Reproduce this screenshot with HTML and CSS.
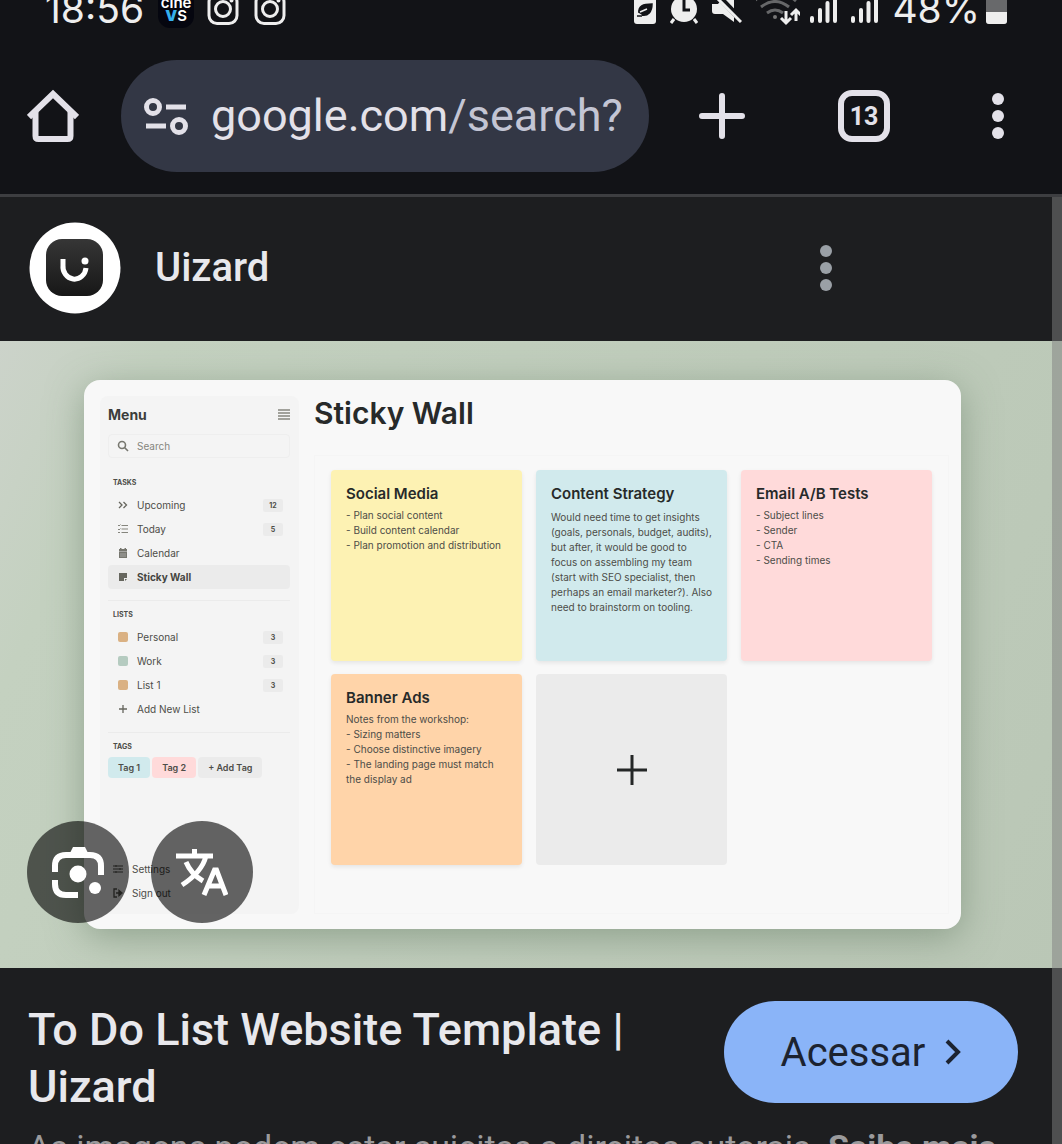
FILE: index.html
```html
<!DOCTYPE html>
<html lang="pt-BR">
<head>
<meta charset="utf-8">
<meta name="viewport" content="width=device-width, initial-scale=1">
<title>To Do List Website Template | Uizard</title>
<link rel="stylesheet" href="styles.css">
</head>
<body>
<div class="phone">
  <header class="status">
    <span class="status-text">18:56</span>
    <div class="cine"><span>cine</span><span><b>V</b>S</span></div>
    <svg class="insta" width="32" height="26" viewBox="0 0 32 26" fill="none" stroke="#eee" stroke-width="3"><rect x="2" y="-6" width="28" height="29.500" rx="8"/><circle cx="16" cy="9" r="7.500"/><circle cx="24.500" cy="0.500" r="1" stroke-width="2"/></svg>
    <svg class="insta" width="32" height="26" viewBox="0 0 32 26" fill="none" stroke="#eee" stroke-width="3"><rect x="2" y="-6" width="28" height="29.500" rx="8"/><circle cx="16" cy="9" r="7.500"/><circle cx="24.500" cy="0.500" r="1" stroke-width="2"/></svg>
    <div class="status-icons">
      <svg width="22" height="26" viewBox="0 0 22 26"><rect y="-8" width="22" height="32" rx="3" fill="#eee"/><path d="M5 13C4 6 9 4 18 4c0 8-4 12-10 11M3 16h5M8 11l5-2" fill="#121317" stroke="#121317" stroke-width="1.500"/><path d="M6 12l7-3" stroke="#eee" stroke-width="1.500"/></svg>
      <svg width="28" height="26" viewBox="0 0 28 26"><circle cx="14" cy="9" r="13" fill="#eee"/><path d="M4 19l-3 4M24 19l3 4" stroke="#eee" stroke-width="3"/><path d="M14 0v10h6" fill="none" stroke="#121317" stroke-width="3"/></svg>
      <svg width="30" height="26" viewBox="0 0 30 26"><path d="M0 4h6l5-6h11v24L11 14H3q-3 0-3-3z" fill="#eee"/><path d="M6-4l25 26" stroke="#121317" stroke-width="6"/><path d="M5-2l24 24" stroke="#eee" stroke-width="3"/></svg>
      <svg class="wifi" width="44" height="26" viewBox="0 0 44 26" fill="none"><path d="M-2 1q21-18 42 0M5 7q14-11 28 0M11 13q8-6 16 0" stroke="#666769" stroke-width="3"/><circle cx="19" cy="17" r="2" fill="#777"/><path d="M30 11v11M25 18l5 5 5-5M40 21V11M35 15l5-5 5 5" stroke="#eee" stroke-width="3"/></svg>
      <svg width="27" height="26" viewBox="0 0 27 26" stroke="#eee" stroke-width="4" stroke-linecap="round"><path d="M2 18v3M10 10v11M17.500 3v18M25-4v25"/></svg>
      <svg width="27" height="26" viewBox="0 0 27 26" stroke="#eee" stroke-width="4" stroke-linecap="round"><path d="M2 18v3M10 10v11M17.500 3v18M25-4v25"/></svg>
      <span class="status-text">48%</span>
      <svg class="battery" width="21" height="26" viewBox="0 0 21 26"><rect y="-8" width="21" height="32" rx="3" fill="#68696b"/><path d="M0 12h21v9q0 3-3 3H3q-3 0-3-3z" fill="#eee"/></svg>
    </div>
  </header>

  <nav class="toolbar">
    <button class="home" aria-label="Home"><svg width="52" height="54" viewBox="0 0 52 54" fill="none" stroke="#e3e1e9" stroke-width="6"><path d="M2 28L26 5l24 23" stroke-linejoin="miter"/><path d="M8.500 23v24q0 3 3 3h29q3 0 3-3V23" /></svg></button>
    <div class="omnibox">
      <svg width="44" height="38" viewBox="0 0 44 38" fill="none" stroke="#e3e1e9" stroke-width="5"><circle cx="9" cy="10" r="6.500"/><path d="M22 10h20M2 29h20"/><circle cx="35" cy="29" r="6.500"/></svg>
      <span class="url">google.com<span>/search?</span></span>
    </div>
    <button class="new-tab" aria-label="New tab"><svg width="46" height="46" viewBox="0 0 46 46" stroke="#e3e1e9" stroke-width="6" stroke-linecap="round"><path d="M23 3v40M3 23h40"/></svg></button>
    <button class="tabs" aria-label="Tabs"><span>13</span></button>
    <button class="more" aria-label="More"><svg width="12" height="46" viewBox="0 0 12 46" fill="#e3e1e9"><circle cx="6" cy="6" r="6"/><circle cx="6" cy="23" r="6"/><circle cx="6" cy="40" r="6"/></svg></button>
  </nav>

  <main class="result">
    <div class="source">
      <svg class="avatar" width="92" height="92" viewBox="0 0 92 92"><defs><linearGradient id="tile" x2="0" y2="1"><stop stop-color="#363636"/><stop offset="1" stop-color="#171717"/></linearGradient></defs><circle cx="46" cy="46" r="45.500" fill="#fff"/><rect x="17" y="17" width="57" height="57" rx="16" fill="url(#tile)"/><path d="M34 37v6a11 12 0 0 0 23 3" fill="none" stroke="#fff" stroke-width="5"/><circle cx="56" cy="39" r="3.500" fill="#fff"/></svg>
      <span class="source-name">Uizard</span>
      <button class="source-more" aria-label="Mais opções"><svg width="12" height="46" viewBox="0 0 12 46" fill="#9aa0a6"><circle cx="6" cy="6" r="6"/><circle cx="6" cy="23" r="6"/><circle cx="6" cy="40" r="6"/></svg></button>
    </div>

    <div class="preview">
      <div class="app">
        <aside class="side">
          <div class="side-head"><h2>Menu</h2><svg width="12" height="12" viewBox="0 0 12 12" stroke="#85857d" stroke-width="1.500"><path d="M0 1h12M0 4h12M0 7h12M0 10h12"/></svg></div>
          <label class="search"><svg width="12" height="12" viewBox="0 0 12 12" fill="none" stroke="#77776f" stroke-width="1.600"><circle cx="5" cy="5" r="3.500"/><path d="M7.500 7.500L11 11"/></svg><input type="text" placeholder="Search" aria-label="Search"></label>
          <h3 class="tasks-title">Tasks</h3>
          <a class="row" href="#"><svg width="10" height="10" viewBox="0 0 10 10" fill="none" stroke="#66665e" stroke-width="1.300"><path d="M1 2l3 3-3 3M5.500 2l3 3-3 3"/></svg>Upcoming<span class="count">12</span></a>
          <a class="row" href="#"><svg width="10" height="10" viewBox="0 0 10 10" fill="none" stroke="#85857d"><path d="M3.500 1.500H10M3.500 5H10M3.500 8.500H10M0 1l1 1 1.500-1.500M0 5l1 1 1.500-1.500M0 8.500h2"/></svg>Today<span class="count">5</span></a>
          <a class="row" href="#"><svg width="10" height="10" viewBox="0 0 10 10"><path d="M1 1h1V0h1.500v1h3V0H8v1h1v9H1z" fill="#77776f"/><path d="M1 3.500h8M2 6h6M2 8h6" stroke="#bbb" stroke-width=".7"/></svg>Calendar</a>
          <a class="row active" href="#"><svg width="10" height="10" viewBox="0 0 10 10" fill="#66665e"><path d="M1 1h8v5H6v3H1z"/><path d="M7 7h2L7 9z"/></svg>Sticky Wall</a>
          <hr>
          <h3>Lists</h3>
          <a class="row" href="#"><i class="swatch tan"></i>Personal<span class="count">3</span></a>
          <a class="row" href="#"><i class="swatch sage"></i>Work<span class="count">3</span></a>
          <a class="row" href="#"><i class="swatch tan"></i>List 1<span class="count">3</span></a>
          <a class="row" href="#"><svg width="10" height="10" viewBox="0 0 10 10" stroke="#66665e" stroke-width="1.300"><path d="M5 1v8M1 5h8"/></svg>Add New List</a>
          <hr>
          <h3>Tags</h3>
          <div class="tags"><button class="tag blue">Tag 1</button><button class="tag pink">Tag 2</button><button class="tag add">+ Add Tag</button></div>
          <div class="side-foot">
            <a class="row" href="#"><svg width="10" height="10" viewBox="0 0 10 10" stroke="#55554f"><path d="M0 2h10M0 5h10M0 8h10M3 1v2M7 4v2M3 7v2"/></svg>Settings</a>
            <a class="row" href="#"><svg width="10" height="10" viewBox="0 0 10 10" fill="none" stroke="#55554f" stroke-width="1.300"><path d="M4 1H1v8h3"/><path d="M3 5h4M6 2.500L9 5 6 7.500z" fill="#55554f"/></svg>Sign out</a>
          </div>
        </aside>
        <section class="wall">
          <h1>Sticky Wall</h1>
          <div class="board">
            <article class="note yellow"><h4>Social Media</h4><p>- Plan social content<br>- Build content calendar<br>- Plan promotion and distribution</p></article>
            <article class="note long blue"><h4>Content Strategy</h4><p>Would need time to get insights<br>(goals, personals, budget, audits),<br>but after, it would be good to<br>focus on assembling my team<br>(start with SEO specialist, then<br>perhaps an email marketer?). Also<br>need to brainstorm on tooling.</p></article>
            <article class="note pink"><h4>Email A/B Tests</h4><p>- Subject lines<br>- Sender<br>- CTA<br>- Sending times</p></article>
            <article class="note orange"><h4>Banner Ads</h4><p>Notes from the workshop:<br>- Sizing matters<br>- Choose distinctive imagery<br>- The landing page must match<br>the display ad</p></article>
            <button class="note new" aria-label="Add note"><svg width="30" height="30" viewBox="0 0 30 30" stroke="#242727" stroke-width="3"><path d="M15 0v30M0 15h30"/></svg></button>
          </div>
        </section>
      </div>
      <div class="actions">
        <button aria-label="Lens"><svg width="52" height="52" viewBox="0 0 52 52" fill="none" stroke="#fff" stroke-width="6"><path d="M3 26v-6Q3 9 14 9h24q11 0 11 11v9M3 34v4q0 11 11 11h12"/><path d="M18 7l3-6h12l3 6z" fill="#fff" stroke="none"/><circle cx="26" cy="28" r="8.500" fill="#fff" stroke="none"/><circle cx="43" cy="42" r="6" fill="#fff" stroke="none"/></svg></button>
        <button aria-label="Traduzir"><svg width="52" height="48" viewBox="0 0 52 48" fill="none" stroke="#fff" stroke-width="5"><path d="M0 8h37M18.500 1v7M30 8Q26 24 6 37M10 14q5 12 17 19" /><path d="M28 47L38.500 22h2L50 47M31 38h17"/></svg></button>
      </div>
    </div>

    <div class="caption">
      <div class="headline">
        <h2>To Do List Website Template | Uizard</h2>
        <a class="visit" href="#">Acessar<svg width="16" height="26" viewBox="0 0 16 26" fill="none" stroke="#1c2330" stroke-width="4"><path d="M2 2l11 11L2 24"/></svg></a>
      </div>
      <p class="rights">As imagens podem estar sujeitas a direitos autorais. <a href="#">Saiba mais</a></p>
    </div>
    <div class="scrollbar"></div>
  </main>
</div>
</body>
</html>
```
FILE: styles.css
```css
* { box-sizing: border-box; }
body, h1, h2, h3, h4, p { margin: 0; }
body { background: #121317; font-family: Roboto, "Liberation Sans", sans-serif; }
button { border: 0; padding: 0; background: none; font: inherit; color: inherit; }
a { color: inherit; text-decoration: none; }
svg { display: block; flex: none; }

.phone { display: flex; flex-direction: column; height: 100vh; overflow: hidden; }

/* status bar */
.status { display: flex; flex: none; align-items: flex-start; height: 38px; padding: 0 55px 0 45px; overflow: hidden; color: #eee; }
.status-text { font: 400 39px/18px Inter, sans-serif; }
.cine { width: 36px; height: 28px; margin: 0 13px 0 14px; border-radius: 0 0 12px 12px; background: #05060f; color: #fff; font: 600 15px/12px Inter, sans-serif; text-align: center; }
.cine span { display: block; height: 9px; line-height: 6px; }
.cine span + span { height: 14px; line-height: 14px; }
.cine b { color: #35b0ee; }
.insta { margin-right: 15px; }
.status-icons { display: flex; gap: 14px; margin-left: auto; }
.wifi { margin-right: -4px; }
.battery { margin-left: -8px; }

/* browser toolbar */
.toolbar { display: flex; flex: none; align-items: center; height: 159px; padding: 0 36px 0 27px; border-bottom: 3px solid #3d3e41; }
.toolbar button { display: grid; place-items: center; }
.home { margin-right: 42px; }
.omnibox { display: flex; flex: 1; align-items: center; gap: 23px; height: 112px; padding: 0 23px; border-radius: 56px; background: #333745; }
.url { overflow: hidden; color: #e3e1e9; font-size: 45px; line-height: 60px; white-space: nowrap; }
.url span { color: #c3c5d4; }
.new-tab { width: 72px; margin-left: 37px; }
.tabs { width: 80px; margin: 0 66px; }
.tabs span { width: 52px; height: 52px; border: 6px solid #e3e1e9; border-radius: 14px; color: #e3e1e9; font-size: 25px; font-weight: 700; line-height: 41px; }
.more { width: 56px; }

/* search result */
.result { position: relative; flex: 1; background: #1d1e20; }
.scrollbar { position: absolute; top: 0; right: 0; bottom: 0; width: 10px; background: rgba(128, 128, 128, .5); }
.source { display: flex; align-items: center; height: 144px; padding: 0 220px 2px 29px; }
.source-name { margin-left: 34px; color: #e8e8ec; font-size: 40px; font-weight: 500; line-height: 48px; }
.source-more { display: grid; place-items: center; width: 32px; margin-left: auto; }

.preview { position: relative; padding: 39px 101px 39px 84px; background: linear-gradient(115deg, #ccd3ca 0, #c4d1c0 12%, #bac7b6 100%); overflow: hidden; }
.app { display: flex; padding: 16px 12px 15px 16px; border-radius: 16px; background: #f8f8f8; box-shadow: 0 8px 36px rgba(95, 120, 95, .5); color: #4d4d48; font-family: Inter, sans-serif; font-size: 10px; }

.side { display: flex; flex: none; flex-direction: column; width: 199px; min-height: 518px; padding: 7px 9px 9px 8px; border-radius: 8px; background: #f4f4f4; }
.side-head { display: flex; align-items: center; justify-content: space-between; height: 24px; }
.side-head h2 { color: #3c3d3b; font-size: 14px; line-height: 24px; }
.search { display: flex; align-items: center; gap: 8px; height: 24px; margin-top: 7px; padding: 0 8px; border: 1px solid #eee; border-radius: 4px; }
.search input { flex: 1; min-width: 0; padding: 0; border: 0; background: none; font: inherit; }
.search input::placeholder { color: #85857d; opacity: 1; }
.side h3 { margin-bottom: 2px; padding-left: 5px; font-size: 7px; line-height: 16px; text-transform: uppercase; }
.side .tasks-title { margin-top: 17px; }
.row { display: flex; align-items: center; gap: 9px; height: 24px; padding: 0 7px 0 10px; border-radius: 4px; }
.row.active { background: #ebebeb; font-weight: 700; color: #454541; }
.count { width: 20px; margin-left: auto; border-radius: 2px; background: #ebebeb; font-size: 7px; font-weight: 700; line-height: 13px; text-align: center; }
.swatch { width: 10px; height: 10px; border-radius: 2px; }
.swatch.tan { background: #dab183; }
.swatch.sage { background: #b5cbc0; }
.side hr { width: 100%; height: 1px; margin: 11px 0 6px; border: 0; background: #ebebeb; }
.tags { display: flex; gap: 2px; }
.tag { height: 21px; padding: 0 10px; border-radius: 4px; background: #ebebeb; font-size: 9px; font-weight: 600; }
.tag.blue { background: #d1eaed; }
.tag.pink { background: #ffdada; }
.side-foot { margin-top: auto; }
.side-foot .row { padding-left: 5px; }

.wall { display: flex; flex: 1; flex-direction: column; margin-left: 15px; }
.wall h1 { color: #272a2a; font-size: 30px; font-weight: 600; line-height: 34px; }
.board { display: grid; flex: 1; grid-template-columns: repeat(3, 1fr); align-content: start; gap: 13px 14px; margin-top: 25px; padding: 14px 16px; border: 1px solid #f5f5f5; }
.note { aspect-ratio: 1; padding: 14px 0 0 15px; border-radius: 4px; box-shadow: 0 2px 4px rgba(0, 0, 0, .08); white-space: nowrap; }
.note h4 { margin-bottom: 4px; color: #272a2a; font-size: 15px; font-weight: 600; line-height: 20px; }
.note.long h4 { margin-bottom: 6px; }
.note p { line-height: 15px; }
.yellow { background: #fdf2b3; }
.blue { background: #d1eaed; }
.pink { background: #ffdada; }
.orange { background: #ffd4a9; }
.new { display: grid; place-items: center; background: #ebebeb; }
.note.new { padding: 0; box-shadow: none; }

.actions { position: absolute; bottom: 45px; left: 27px; display: flex; gap: 22px; }
.actions button { display: grid; place-items: center; width: 102px; height: 102px; border-radius: 50%; background: rgba(0, 0, 0, .6); }

/* caption */
.caption { padding: 33px 44px 0 28px; }
.headline { display: flex; align-items: flex-start; justify-content: space-between; gap: 24px; }
.headline h2 { color: #e8e8ec; font-size: 45px; font-weight: 500; line-height: 57px; }
.visit { display: flex; flex: none; align-items: center; justify-content: center; gap: 20px; width: 294px; height: 102px; border-radius: 51px; background: #8ab4f8; color: #1c2330; font-size: 40px; }
.rights { margin-top: 8px; color: #9a9a9c; font-size: 34px; line-height: 48px; white-space: nowrap; }
.rights a { font-weight: 700; }
```
